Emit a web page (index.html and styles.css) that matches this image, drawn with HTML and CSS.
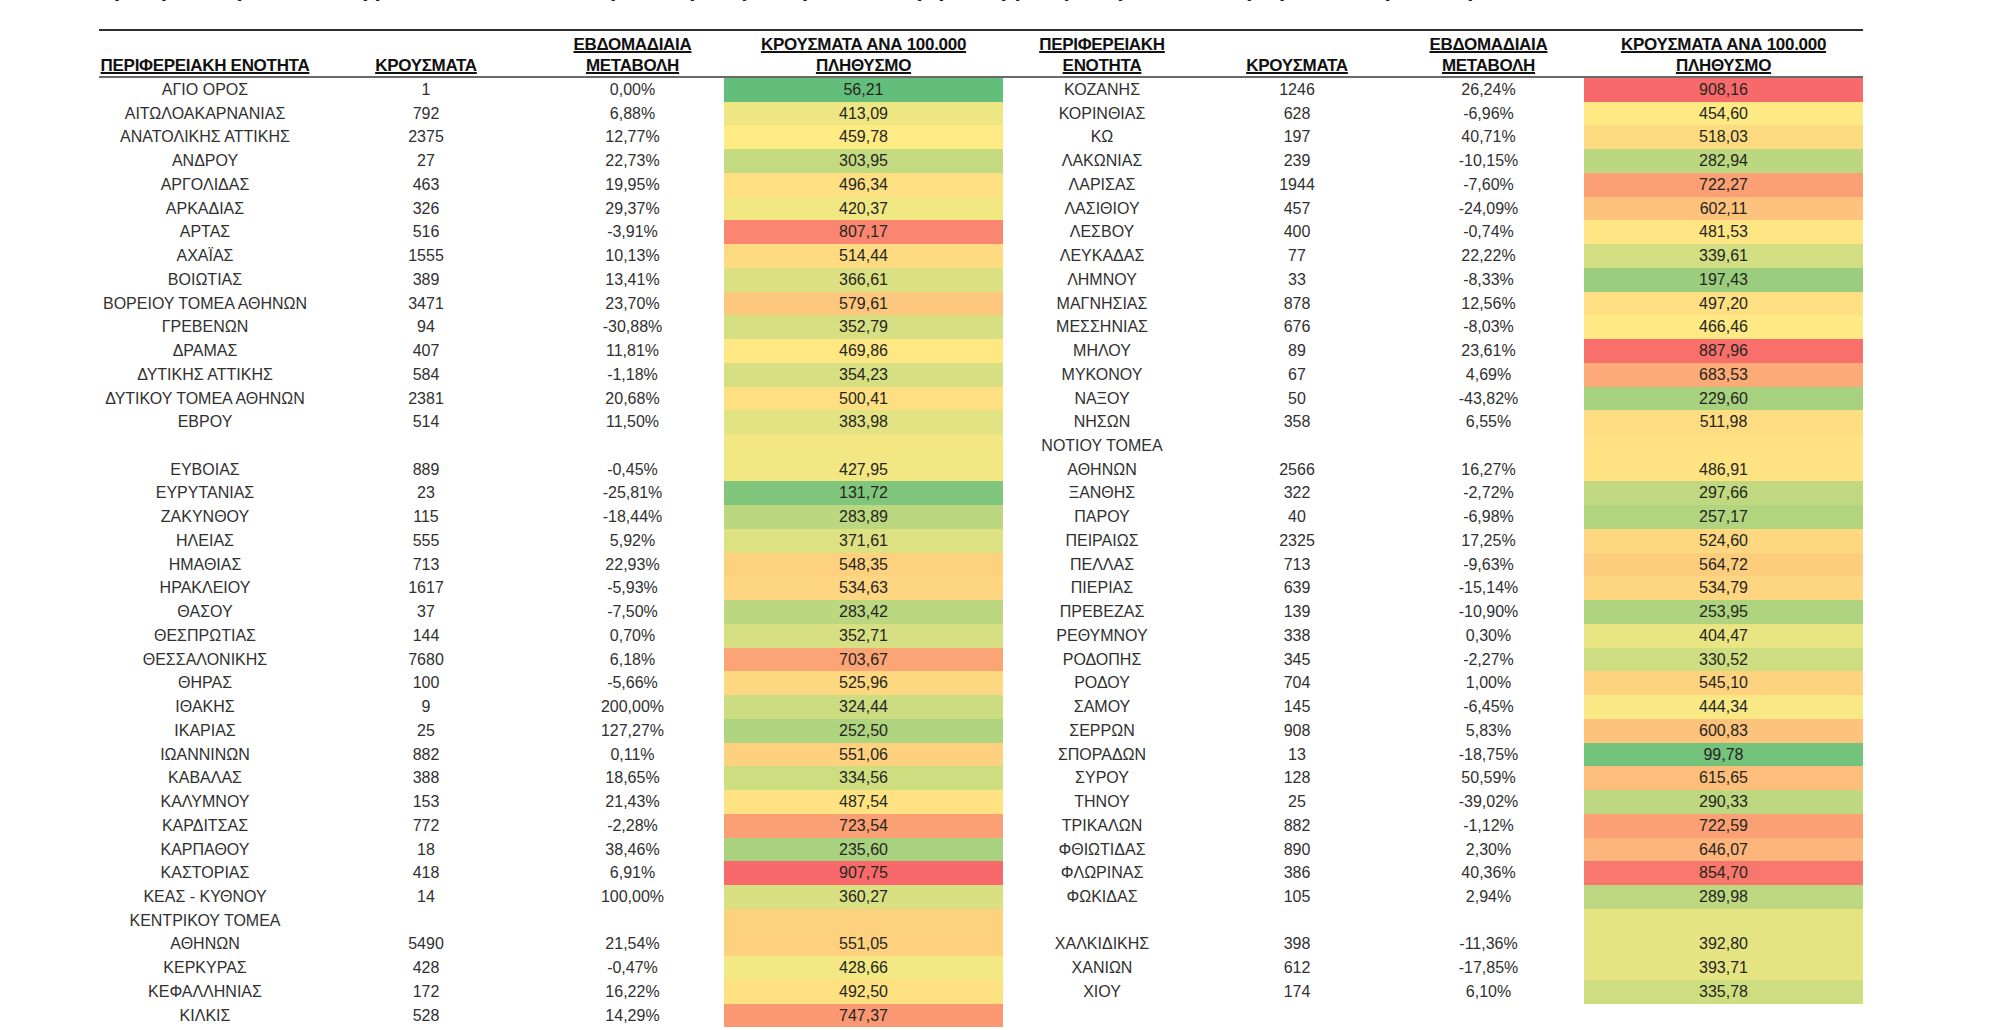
FILE: index.html
```html
<!DOCTYPE html>
<html lang="el">
<head>
<meta charset="utf-8">
<title>Κρούσματα ανά περιφερειακή ενότητα</title>
<link rel="stylesheet" href="styles.css">
<script src="script.js" defer></script>
</head>
<body>
<div class="caption"><div class="caption-text">με βάση τα στοιχεία του ΕΟΔΥ για την εβδομάδα, η γεωγραφική κατανομή των κρουσμάτων ανά περιφερειακή ενότητα, η εβδομαδιαία μεταβολή και η επίπτωση ανά 100.000 πληθυσμό</div></div>
<div class="sheet">
<table class="grid">
<colgroup>
<col class="w-name-l"><col class="w-cases-l"><col class="w-chg-l"><col class="w-heat">
<col class="w-name-r"><col class="w-cases-r"><col class="w-chg-r"><col class="w-heat">
</colgroup>
<thead>
<tr>
<th><span>ΠΕΡΙΦΕΡΕΙΑΚΗ ΕΝΟΤΗΤΑ</span></th>
<th><span>ΚΡΟΥΣΜΑΤΑ</span></th>
<th><span>ΕΒΔΟΜΑΔΙΑΙΑ<br>ΜΕΤΑΒΟΛΗ</span></th>
<th><span>ΚΡΟΥΣΜΑΤΑ ΑΝΑ 100.000<br>ΠΛΗΘΥΣΜΟ</span></th>
<th><span>ΠΕΡΙΦΕΡΕΙΑΚΗ<br>ΕΝΟΤΗΤΑ</span></th>
<th><span>ΚΡΟΥΣΜΑΤΑ</span></th>
<th><span>ΕΒΔΟΜΑΔΙΑΙΑ<br>ΜΕΤΑΒΟΛΗ</span></th>
<th><span>ΚΡΟΥΣΜΑΤΑ ΑΝΑ 100.000<br>ΠΛΗΘΥΣΜΟ</span></th>
</tr>
</thead>
<tbody>
<tr><td>ΑΓΙΟ ΟΡΟΣ</td><td>1</td><td>0,00%</td><td class="heat">56,21</td><td>ΚΟΖΑΝΗΣ</td><td>1246</td><td>26,24%</td><td class="heat">908,16</td></tr>
<tr><td>ΑΙΤΩΛΟΑΚΑΡΝΑΝΙΑΣ</td><td>792</td><td>6,88%</td><td class="heat">413,09</td><td>ΚΟΡΙΝΘΙΑΣ</td><td>628</td><td>-6,96%</td><td class="heat">454,60</td></tr>
<tr><td>ΑΝΑΤΟΛΙΚΗΣ ΑΤΤΙΚΗΣ</td><td>2375</td><td>12,77%</td><td class="heat">459,78</td><td>ΚΩ</td><td>197</td><td>40,71%</td><td class="heat">518,03</td></tr>
<tr><td>ΑΝΔΡΟΥ</td><td>27</td><td>22,73%</td><td class="heat">303,95</td><td>ΛΑΚΩΝΙΑΣ</td><td>239</td><td>-10,15%</td><td class="heat">282,94</td></tr>
<tr><td>ΑΡΓΟΛΙΔΑΣ</td><td>463</td><td>19,95%</td><td class="heat">496,34</td><td>ΛΑΡΙΣΑΣ</td><td>1944</td><td>-7,60%</td><td class="heat">722,27</td></tr>
<tr><td>ΑΡΚΑΔΙΑΣ</td><td>326</td><td>29,37%</td><td class="heat">420,37</td><td>ΛΑΣΙΘΙΟΥ</td><td>457</td><td>-24,09%</td><td class="heat">602,11</td></tr>
<tr><td>ΑΡΤΑΣ</td><td>516</td><td>-3,91%</td><td class="heat">807,17</td><td>ΛΕΣΒΟΥ</td><td>400</td><td>-0,74%</td><td class="heat">481,53</td></tr>
<tr><td>ΑΧΑΪΑΣ</td><td>1555</td><td>10,13%</td><td class="heat">514,44</td><td>ΛΕΥΚΑΔΑΣ</td><td>77</td><td>22,22%</td><td class="heat">339,61</td></tr>
<tr><td>ΒΟΙΩΤΙΑΣ</td><td>389</td><td>13,41%</td><td class="heat">366,61</td><td>ΛΗΜΝΟΥ</td><td>33</td><td>-8,33%</td><td class="heat">197,43</td></tr>
<tr><td>ΒΟΡΕΙΟΥ ΤΟΜΕΑ ΑΘΗΝΩΝ</td><td>3471</td><td>23,70%</td><td class="heat">579,61</td><td>ΜΑΓΝΗΣΙΑΣ</td><td>878</td><td>12,56%</td><td class="heat">497,20</td></tr>
<tr><td>ΓΡΕΒΕΝΩΝ</td><td>94</td><td>-30,88%</td><td class="heat">352,79</td><td>ΜΕΣΣΗΝΙΑΣ</td><td>676</td><td>-8,03%</td><td class="heat">466,46</td></tr>
<tr><td>ΔΡΑΜΑΣ</td><td>407</td><td>11,81%</td><td class="heat">469,86</td><td>ΜΗΛΟΥ</td><td>89</td><td>23,61%</td><td class="heat">887,96</td></tr>
<tr><td>ΔΥΤΙΚΗΣ ΑΤΤΙΚΗΣ</td><td>584</td><td>-1,18%</td><td class="heat">354,23</td><td>ΜΥΚΟΝΟΥ</td><td>67</td><td>4,69%</td><td class="heat">683,53</td></tr>
<tr><td>ΔΥΤΙΚΟΥ ΤΟΜΕΑ ΑΘΗΝΩΝ</td><td>2381</td><td>20,68%</td><td class="heat">500,41</td><td>ΝΑΞΟΥ</td><td>50</td><td>-43,82%</td><td class="heat">229,60</td></tr>
<tr><td>ΕΒΡΟΥ</td><td>514</td><td>11,50%</td><td class="heat">383,98</td><td>ΝΗΣΩΝ</td><td>358</td><td>6,55%</td><td class="heat">511,98</td></tr>
<tr class="tall"><td>ΕΥΒΟΙΑΣ</td><td>889</td><td>-0,45%</td><td class="heat">427,95</td><td>ΝΟΤΙΟΥ ΤΟΜΕΑ<br>ΑΘΗΝΩΝ</td><td>2566</td><td>16,27%</td><td class="heat">486,91</td></tr>
<tr><td>ΕΥΡΥΤΑΝΙΑΣ</td><td>23</td><td>-25,81%</td><td class="heat">131,72</td><td>ΞΑΝΘΗΣ</td><td>322</td><td>-2,72%</td><td class="heat">297,66</td></tr>
<tr><td>ΖΑΚΥΝΘΟΥ</td><td>115</td><td>-18,44%</td><td class="heat">283,89</td><td>ΠΑΡΟΥ</td><td>40</td><td>-6,98%</td><td class="heat">257,17</td></tr>
<tr><td>ΗΛΕΙΑΣ</td><td>555</td><td>5,92%</td><td class="heat">371,61</td><td>ΠΕΙΡΑΙΩΣ</td><td>2325</td><td>17,25%</td><td class="heat">524,60</td></tr>
<tr><td>ΗΜΑΘΙΑΣ</td><td>713</td><td>22,93%</td><td class="heat">548,35</td><td>ΠΕΛΛΑΣ</td><td>713</td><td>-9,63%</td><td class="heat">564,72</td></tr>
<tr><td>ΗΡΑΚΛΕΙΟΥ</td><td>1617</td><td>-5,93%</td><td class="heat">534,63</td><td>ΠΙΕΡΙΑΣ</td><td>639</td><td>-15,14%</td><td class="heat">534,79</td></tr>
<tr><td>ΘΑΣΟΥ</td><td>37</td><td>-7,50%</td><td class="heat">283,42</td><td>ΠΡΕΒΕΖΑΣ</td><td>139</td><td>-10,90%</td><td class="heat">253,95</td></tr>
<tr><td>ΘΕΣΠΡΩΤΙΑΣ</td><td>144</td><td>0,70%</td><td class="heat">352,71</td><td>ΡΕΘΥΜΝΟΥ</td><td>338</td><td>0,30%</td><td class="heat">404,47</td></tr>
<tr><td>ΘΕΣΣΑΛΟΝΙΚΗΣ</td><td>7680</td><td>6,18%</td><td class="heat">703,67</td><td>ΡΟΔΟΠΗΣ</td><td>345</td><td>-2,27%</td><td class="heat">330,52</td></tr>
<tr><td>ΘΗΡΑΣ</td><td>100</td><td>-5,66%</td><td class="heat">525,96</td><td>ΡΟΔΟΥ</td><td>704</td><td>1,00%</td><td class="heat">545,10</td></tr>
<tr><td>ΙΘΑΚΗΣ</td><td>9</td><td>200,00%</td><td class="heat">324,44</td><td>ΣΑΜΟΥ</td><td>145</td><td>-6,45%</td><td class="heat">444,34</td></tr>
<tr><td>ΙΚΑΡΙΑΣ</td><td>25</td><td>127,27%</td><td class="heat">252,50</td><td>ΣΕΡΡΩΝ</td><td>908</td><td>5,83%</td><td class="heat">600,83</td></tr>
<tr><td>ΙΩΑΝΝΙΝΩΝ</td><td>882</td><td>0,11%</td><td class="heat">551,06</td><td>ΣΠΟΡΑΔΩΝ</td><td>13</td><td>-18,75%</td><td class="heat">99,78</td></tr>
<tr><td>ΚΑΒΑΛΑΣ</td><td>388</td><td>18,65%</td><td class="heat">334,56</td><td>ΣΥΡΟΥ</td><td>128</td><td>50,59%</td><td class="heat">615,65</td></tr>
<tr><td>ΚΑΛΥΜΝΟΥ</td><td>153</td><td>21,43%</td><td class="heat">487,54</td><td>ΤΗΝΟΥ</td><td>25</td><td>-39,02%</td><td class="heat">290,33</td></tr>
<tr><td>ΚΑΡΔΙΤΣΑΣ</td><td>772</td><td>-2,28%</td><td class="heat">723,54</td><td>ΤΡΙΚΑΛΩΝ</td><td>882</td><td>-1,12%</td><td class="heat">722,59</td></tr>
<tr><td>ΚΑΡΠΑΘΟΥ</td><td>18</td><td>38,46%</td><td class="heat">235,60</td><td>ΦΘΙΩΤΙΔΑΣ</td><td>890</td><td>2,30%</td><td class="heat">646,07</td></tr>
<tr><td>ΚΑΣΤΟΡΙΑΣ</td><td>418</td><td>6,91%</td><td class="heat">907,75</td><td>ΦΛΩΡΙΝΑΣ</td><td>386</td><td>40,36%</td><td class="heat">854,70</td></tr>
<tr><td>ΚΕΑΣ - ΚΥΘΝΟΥ</td><td>14</td><td>100,00%</td><td class="heat">360,27</td><td>ΦΩΚΙΔΑΣ</td><td>105</td><td>2,94%</td><td class="heat">289,98</td></tr>
<tr class="tall"><td>ΚΕΝΤΡΙΚΟΥ ΤΟΜΕΑ<br>ΑΘΗΝΩΝ</td><td>5490</td><td>21,54%</td><td class="heat">551,05</td><td>ΧΑΛΚΙΔΙΚΗΣ</td><td>398</td><td>-11,36%</td><td class="heat">392,80</td></tr>
<tr><td>ΚΕΡΚΥΡΑΣ</td><td>428</td><td>-0,47%</td><td class="heat">428,66</td><td>ΧΑΝΙΩΝ</td><td>612</td><td>-17,85%</td><td class="heat">393,71</td></tr>
<tr><td>ΚΕΦΑΛΛΗΝΙΑΣ</td><td>172</td><td>16,22%</td><td class="heat">492,50</td><td>ΧΙΟΥ</td><td>174</td><td>6,10%</td><td class="heat">335,78</td></tr>
<tr><td>ΚΙΛΚΙΣ</td><td>528</td><td>14,29%</td><td class="heat">747,37</td><td></td><td></td><td></td><td></td></tr>
</tbody>
</table>
</div>
</body>
</html>
```

FILE: styles.css
```css
html, body {
  margin: 0;
  padding: 0;
  background: #ffffff;
}

body {
  font-family: "Liberation Sans", Arial, sans-serif;
  color: #333333;
  overflow: hidden;
}

.caption {
  height: 29px;
  overflow: hidden;
  padding-left: 113px;
}

.caption-text {
  width: 1429px;
  overflow: hidden;
  white-space: nowrap;
  font-size: 36px;
  line-height: 36px;
  margin-top: -35px;
  color: #222222;
}

.sheet {
  padding-left: 99px;
}

.grid {
  table-layout: fixed;
  width: 1764px;
  border-collapse: separate;
  border-spacing: 0;
}

.w-name-l { width: 212px; }
.w-cases-l { width: 230px; }
.w-chg-l { width: 183px; }
.w-heat { width: 279px; }
.w-name-r { width: 198px; }
.w-cases-r { width: 192px; }
.w-chg-r { width: 191px; }

.grid thead tr {
  height: 49px;
}

.grid th {
  padding: 0;
  border-top: 2px solid #2e2e2e;
  border-bottom: 2px solid #6a6a6a;
  vertical-align: bottom;
  text-align: center;
  font-weight: bold;
  font-size: 17px;
  line-height: 21px;
  letter-spacing: -0.3px;
  color: #111111;
  white-space: nowrap;
}

.grid th span {
  text-decoration: underline;
  text-decoration-thickness: 1.5px;
  text-underline-offset: 1px;
}

.grid tbody tr {
  height: 23.74px;
}

.grid tbody tr.tall {
  height: 47.48px;
}

.grid td {
  padding: 0;
  vertical-align: bottom;
  text-align: center;
  font-size: 16px;
  line-height: 23.74px;
  white-space: nowrap;
  color: #303030;
}

.grid td.heat {
  color: #26261e;
}
```

FILE: script.js
```js
(function () {
  var cells = Array.prototype.slice.call(document.querySelectorAll('.heat'));
  var vals = cells.map(function (c) {
    return parseFloat(c.textContent.replace('.', '').replace(',', '.'));
  });
  var sorted = vals.slice().sort(function (a, b) { return a - b; });
  var min = sorted[0];
  var max = sorted[sorted.length - 1];
  var pos = (sorted.length - 1) * 0.5;
  var lo = Math.floor(pos);
  var hi = Math.ceil(pos);
  var mid = sorted[lo] + (sorted[hi] - sorted[lo]) * (pos - lo);
  var G = [99, 190, 123];
  var Y = [255, 235, 132];
  var R = [248, 105, 107];
  function mix(a, b, t) {
    return a.map(function (v, i) { return Math.round(v + (b[i] - v) * t); });
  }
  cells.forEach(function (c, i) {
    var v = vals[i];
    var col = v <= mid ? mix(G, Y, (v - min) / (mid - min)) : mix(Y, R, (v - mid) / (max - mid));
    c.style.backgroundColor = 'rgb(' + col.join(',') + ')';
  });
})();
```
